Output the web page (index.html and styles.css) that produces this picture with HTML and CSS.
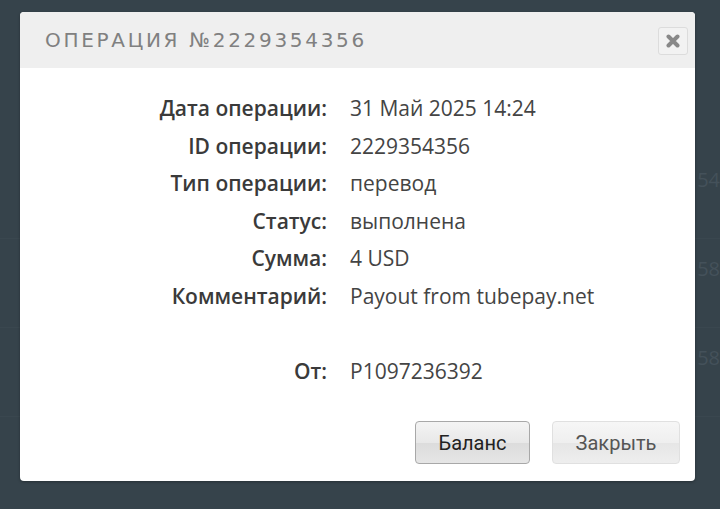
FILE: index.html
```html
<!DOCTYPE html>
<html lang="ru">
<head>
  <meta charset="UTF-8" />
  <title>Операция №2229354356</title>
  <link rel="stylesheet" href="styles.css">
</head>
<body>

  <div class="page">
    <div class="bg-row"><span>54</span></div>
    <div class="bg-row"><span>58</span></div>
    <div class="bg-row"><span>58</span></div>
  </div>

  <div class="modal">
    <div class="modal-header">
      <h2>Операция №2229354356</h2>
      <button class="close-btn" title="Закрыть">
        <svg width="14" height="14" viewBox="0 0 14 14"><path d="M2.5 2.5 L11.5 11.5 M11.5 2.5 L2.5 11.5" stroke="#888" stroke-width="4" stroke-linecap="round"/></svg>
      </button>
    </div>
    <div class="modal-body">
      <div class="details">
        <div class="label">Дата операции:</div><div class="value">31 Май 2025 14:24</div>
        <div class="label">ID операции:</div><div class="value">2229354356</div>
        <div class="label">Тип операции:</div><div class="value">перевод</div>
        <div class="label">Статус:</div><div class="value">выполнена</div>
        <div class="label">Сумма:</div><div class="value">4 USD</div>
        <div class="label">Комментарий:</div><div class="value">Payout from tubepay.net</div>
        <div class="label"></div><div class="value"></div>
        <div class="label">От:</div><div class="value">P1097236392</div>
      </div>
      <div class="actions">
        <button class="btn btn-dark">Баланс</button>
        <button class="btn btn-light">Закрыть</button>
      </div>
    </div>
  </div>

</body>
</html>
```

FILE: styles.css
```css
body {
  margin: 0;
  background-color: #36434b;
  font-family: "Open Sans", Arial, sans-serif;
  width: 720px;
  height: 509px;
  overflow: hidden;
  position: relative;
}
.page {
  padding-top: 150px;
}
.bg-row {
  height: 88px;
  border-bottom: 1px solid #3a474f;
  text-align: right;
  color: #44515a;
  font-size: 20px;
  line-height: 60px;
}
.modal {
  position: absolute;
  left: 20px;
  top: 12px;
  width: 675px;
  height: 469px;
  background: #fff;
  border-radius: 4px;
  overflow: hidden;
  box-shadow: 0 1px 3px rgba(0, 0, 0, 0.3);
}
.modal-header {
  height: 56px;
  background: #efefef;
  display: flex;
  align-items: center;
  justify-content: space-between;
  padding: 0 7px 0 25px;
}
.modal-header h2 {
  margin: 0;
  font-family: "DejaVu Sans", sans-serif;
  font-weight: normal;
  font-size: 20px;
  letter-spacing: 2.7px;
  color: #808080;
  text-transform: uppercase;
}
.close-btn {
  width: 30px;
  height: 28px;
  margin-top: 1px;
  border: 1px solid #dcdcdc;
  border-radius: 3px;
  background: #f2f2f2;
  padding: 0;
  display: flex;
  align-items: center;
  justify-content: center;
}
.modal-body {
  padding: 22px 15px 15px 0;
}
.details {
  display: grid;
  grid-template-columns: 307px 1fr;
  column-gap: 23px;
  font-size: 21px;
  line-height: 37.6px;
}
.label {
  text-align: right;
  color: #3a3a3a;
  font-weight: 600;
  min-height: 37.6px;
}
.value {
  color: #444;
  min-height: 37.6px;
}
.actions {
  display: flex;
  justify-content: flex-end;
  gap: 22px;
  margin-top: 30px;
}
.btn {
  height: 43px;
  padding-top: 3px;
  font-family: Roboto, Arial, sans-serif;
  font-size: 20px;
  border-radius: 4px;
  cursor: pointer;
}
.btn-dark {
  width: 115px;
  color: #222;
  border: 1px solid #a8a8a8;
  background: linear-gradient(#f4f4f4, #e8e8e8 50%, #dcdcdc 52%, #e6e6e6);
}
.btn-light {
  width: 128px;
  color: #555;
  border: 1px solid #e0e0e0;
  background: linear-gradient(#f6f6f6, #efefef 50%, #e6e6e6 52%, #eeeeee);
}
```
